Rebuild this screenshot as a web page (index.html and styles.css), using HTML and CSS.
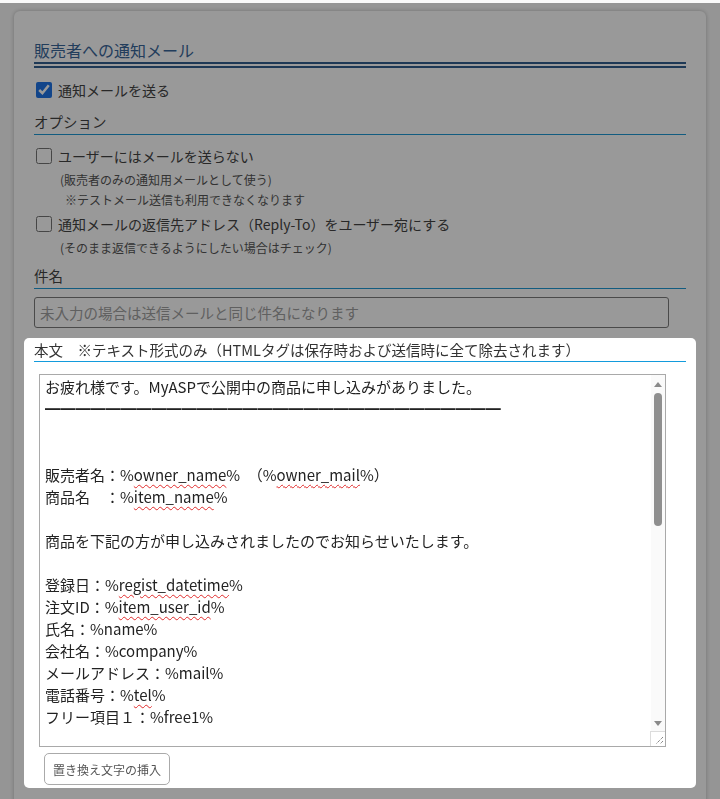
FILE: index.html
```html
<!DOCTYPE html>
<html lang="ja">

<head>
    <meta charset="UTF-8">
    <meta name="viewport" content="width=device-width, initial-scale=1.0">
    <title>販売者への通知メール</title>
    <link rel="stylesheet" href="styles.css">
</head>

<body>
    <div class="page">
        <div class="card">
            <h2 class="section-title">販売者への通知メール</h2>
            <label class="check-row check-first"><input type="checkbox" checked> 通知メールを送る</label>

            <h3 class="sub-title">オプション</h3>
            <div class="option option-first">
                <label class="check-row"><input type="checkbox"> ユーザーにはメールを送らない</label>
                <p class="note">(販売者のみの通知用メールとして使う)</p>
                <p class="note note-indent">※テストメール送信も利用できなくなります</p>
            </div>
            <div class="option">
                <label class="check-row"><input type="checkbox"> 通知メールの返信先アドレス（Reply-To）をユーザー宛にする</label>
                <p class="note">(そのまま返信できるようにしたい場合はチェック)</p>
            </div>

            <h3 class="sub-title subject-title">件名</h3>
            <input type="text" class="text-input" placeholder="未入力の場合は送信メールと同じ件名になります">

            <div class="focus-block">
                <h3 class="sub-title body-title">本文　※テキスト形式のみ（HTMLタグは保存時および送信時に全て除去されます）</h3>
                <div class="editor-wrap">
                    <div class="body-editor" contenteditable="true" spellcheck="false">お疲れ様です。MyASPで公開中の商品に申し込みがありました。
<span class="rule">━━━━━━━━━━━━━━━━━━━━━━━━━━━━━━</span>


販売者名：%<span class="typo">owner_name</span>%　（%<span class="typo">owner_mail</span>%）
商品名　：%<span class="typo">item_name</span>%

商品を下記の方が申し込みされましたのでお知らせいたします。

登録日：%<span class="typo">regist_datetime</span>%
注文ID：%<span class="typo">item_user_id</span>%
氏名：%name%
会社名：%company%
メールアドレス：%mail%
電話番号：%<span class="typo">tel</span>%
フリー項目１：%free1%

フリー項目２：%free2%
</div>
                    <div class="scrollbar">
                        <div class="scroll-arrow"><span class="tri-up"></span></div>
                        <div class="scroll-track"><div class="scroll-thumb"></div></div>
                        <div class="scroll-arrow"><span class="tri-down"></span></div>
                        <div class="resizer">
                            <svg width="14" height="14" viewBox="0 0 14 14">
                                <line x1="12" y1="5" x2="5" y2="12" stroke="#555" stroke-width="1" stroke-dasharray="1 1"/>
                                <line x1="12" y1="9" x2="9" y2="12" stroke="#555" stroke-width="1" stroke-dasharray="1 1"/>
                            </svg>
                        </div>
                    </div>
                </div>
                <button class="small-button">置き換え文字の挿入</button>
            </div>
        </div>
    </div>
    <div class="dim"></div>
</body>

</html>
```

FILE: styles.css
```css
body {
    margin: 0;
    background-color: #f9f9f9;
    font-family: 'Noto Sans CJK JP', 'Noto Sans', sans-serif;
    color: #333;
}

.page {
    padding: 11px 14px 0 14px;
}

.card {
    background-color: #fff;
    border-radius: 6px;
    box-shadow: 0 0 4px rgba(0, 0, 0, 0.25);
    padding: 27px 20px 40px 20px;
}

.section-title {
    margin: 0;
    font-size: 16px;
    font-weight: normal;
    line-height: 24px;
    color: #3a679a;
    border-bottom: 6px double #33608f;
}

.check-row {
    display: flex;
    align-items: center;
    gap: 6px;
    font-size: 14px;
    line-height: 24px;
    color: #444;
}

.check-row input {
    width: 16px;
    height: 16px;
    margin: 0 0 0 2px;
    accent-color: #1f74e6;
}

.check-first {
    margin-top: 10px;
}

.sub-title {
    margin: 10px 0 0 0;
    font-size: 14.5px;
    font-weight: normal;
    line-height: 20px;
    color: #444;
    padding-bottom: 2px;
    border-bottom: 1px solid #1e9ad6;
}

.option-first {
    margin-top: 9px;
}

.option {
    margin-bottom: 2px;
}

.note {
    margin: 0;
    padding-left: 26px;
    font-size: 12px;
    line-height: 20px;
    color: #555;
}

.note-indent {
    padding-left: 31px;
}

.option .check-row + .note {
    margin-top: 2px;
}

.subject-title {
    margin-top: 8px;
}

.text-input {
    display: block;
    box-sizing: border-box;
    width: 635px;
    height: 31px;
    margin-top: 8px;
    padding: 0 5px;
    border: 1px solid #7c7c7c;
    border-radius: 3px;
    font-family: inherit;
    font-size: 14.5px;
    color: #333;
}

.text-input::placeholder {
    color: #a0a0a0;
}

.focus-block {
    position: relative;
    z-index: 20;
    margin: 10px -10px 0 -10px;
    padding: 2px 10px 3px 10px;
    background-color: #fff;
    border-radius: 5px;
}

.body-title {
    margin-top: 0;
    padding-bottom: 1px;
    color: #333;
    border-bottom: 1px solid #139bdc;
}

.editor-wrap {
    position: relative;
    width: 627px;
    margin: 12px 0 0 5px;
}

.body-editor {
    box-sizing: border-box;
    height: 373px;
    padding: 1px 20px 1px 5px;
    border: 1px solid #a9a9a9;
    font-size: 15px;
    line-height: 22px;
    color: #222;
    white-space: pre-wrap;
    overflow: hidden;
    outline: none;
}

.rule {
    font-weight: 700;
    letter-spacing: 0.2px;
}

.typo {
    text-decoration: underline wavy #e02b2b;
    text-decoration-thickness: 1px;
    text-underline-offset: 3px;
}

/* fake textarea scrollbar */
.scrollbar {
    position: absolute;
    top: 1px;
    right: 1px;
    bottom: 1px;
    width: 14px;
    display: flex;
    flex-direction: column;
    background-color: #fafafa;
}

.scroll-arrow {
    height: 16px;
    display: flex;
    align-items: center;
    justify-content: center;
}

.tri-up {
    width: 0;
    height: 0;
    border-left: 4px solid transparent;
    border-right: 4px solid transparent;
    border-bottom: 5px solid #8a8a8a;
    margin-top: 2px;
}

.tri-down {
    width: 0;
    height: 0;
    border-left: 4px solid transparent;
    border-right: 4px solid transparent;
    border-top: 5px solid #8a8a8a;
}

.scroll-track {
    flex: 1;
    display: flex;
    justify-content: center;
}

.scroll-thumb {
    width: 8px;
    height: 133px;
    margin-top: 2px;
    background-color: #8f8f8f;
    border-radius: 4px;
}

.resizer {
    box-sizing: border-box;
    height: 15px;
    margin-left: -1px;
    border-top: 1px solid #dcdcdc;
    border-left: 1px solid #dcdcdc;
    background-color: #fff;
}

.resizer svg {
    display: block;
}

.small-button {
    display: block;
    width: 126px;
    height: 32px;
    margin: 6px 0 0 10px;
    padding: 0;
    background-color: #fff;
    border: 1px solid #aaa;
    border-radius: 5px;
    font-family: inherit;
    font-size: 12px;
    color: #555;
    cursor: pointer;
}

.dim {
    position: fixed;
    top: 3px;
    left: 0;
    right: 0;
    bottom: 0;
    z-index: 10;
    background-color: rgba(0, 0, 0, 0.4);
}
```
